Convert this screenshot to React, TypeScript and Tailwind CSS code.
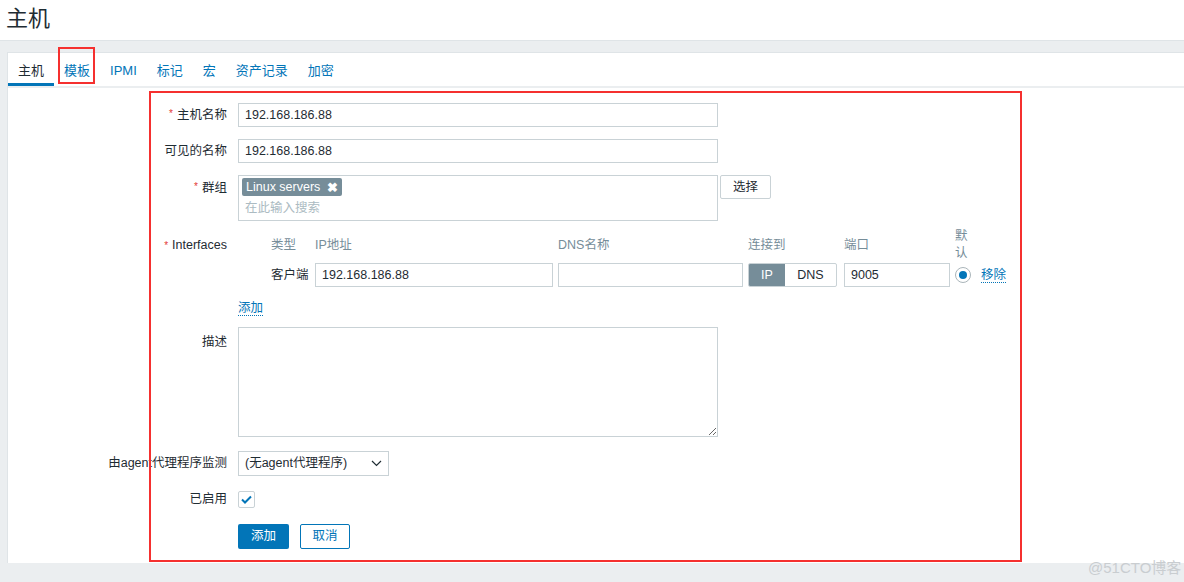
import React from 'react';

const FONT = "font-['Liberation_Sans','Noto_Sans_CJK_SC',sans-serif]";
const inp = 'h-[24px] border border-[#c9d2d6] bg-white px-[6px] flex items-center text-[12.5px] text-[#1f2c33]';

const tabs = ['主机', '模板', 'IPMI', '标记', '宏', '资产记录', '加密'];

function Label({ text, req, className = '' }: { text: string; req?: boolean; className?: string }) {
  return (
    <div className={`w-[220px] shrink-0 pr-[1px] text-right text-[12.5px] text-[#1f2c33] whitespace-nowrap ${className}`}>
      {req && <span className="text-[#e33734] text-[10px] mr-[4px] align-top">*</span>}
      {text}
    </div>
  );
}

export default function App() {
  return (
    <div className={`relative h-[582px] w-[1184px] overflow-hidden bg-[#ebeef0] ${FONT}`}>
      {/* Header */}
      <div className="h-[41px] bg-white border-b border-[#dfe4e7] pl-[6px] flex items-center">
        <h1 className="text-[22px] text-[#1f2c33] leading-none -mt-[2px]">主机</h1>
      </div>

      {/* Panel */}
      <div className="mt-[11px] ml-[7px] h-[511px] bg-white border-l border-t border-[#dfe4e7]">
        {/* Tabs */}
        <div className="h-[35px] border-b-2 border-[#ebeef0] flex items-end">
          {tabs.map((t, i) => (
            <div
              key={t}
              className={`h-[32px] px-[10px] flex items-center text-[13px] ${i === 0 ? 'text-[#1f2c33] border-b-[3px] border-[#0275b8] pt-[4px]' : 'text-[#0275b8] pt-[1px]'}`}
            >
              {t}
            </div>
          ))}
        </div>

        {/* Form */}
        <div className="pt-[15px] flex flex-col">
          <div className="flex items-center gap-[10px]">
            <Label text="主机名称" req />
            <div className={`${inp} w-[480px]`}>192.168.186.88</div>
          </div>

          <div className="mt-[12px] flex items-center gap-[10px]">
            <Label text="可见的名称" />
            <div className={`${inp} w-[480px]`}>192.168.186.88</div>
          </div>

          <div className="mt-[12px] flex items-start gap-[10px]">
            <Label text="群组" req className="pt-[4px]" />
            <div className="w-[480px] h-[46px] border border-[#c9d2d6] px-[3px] pt-[2px] flex flex-col items-start">
              <div className="flex items-center h-[18px] bg-[#768d99] text-white text-[12.5px] px-[4px] gap-[7px] rounded-[2px]">
                Linux servers
                <span className="text-[13px] font-bold leading-none">✖</span>
              </div>
              <div className="text-[12.5px] text-[#acbbc2] pl-[3px] mt-[4px] leading-[16px]">在此输入搜索</div>
            </div>
            <div className="-ml-[8px] h-[24px] w-[51px] border border-[#c9d2d6] rounded-[2px] flex items-center justify-center text-[12.5px] text-[#1f2c33]">
              选择
            </div>
          </div>

          {/* Interfaces */}
          <div className="mt-[7px] flex items-start gap-[10px]">
            <Label text="Interfaces" req className="h-[34px] flex items-center justify-end" />
            <div className="pl-[33px]">
              <div className="h-[34px] flex items-center text-[12.5px] text-[#768d99]">
                <div className="w-[44px]">类型</div>
                <div className="w-[243px]">IP地址</div>
                <div className="w-[190px]">DNS名称</div>
                <div className="w-[96px]">连接到</div>
                <div className="w-[111px]">端口</div>
                <div className="w-[14px] leading-[17px]">默认</div>
              </div>
              <div className="mt-[1px] flex items-center text-[12.5px]">
                <div className="w-[44px] text-[#1f2c33]">客户端</div>
                <div className={`${inp} w-[238px]`}>192.168.186.88</div>
                <div className={`${inp} w-[185px] ml-[5px]`}></div>
                <div className="ml-[5px] h-[24px] flex border border-[#c9d2d6] rounded-[2px] overflow-hidden">
                  <div className="w-[36px] bg-[#768d99] text-white flex items-center justify-center">IP</div>
                  <div className="w-[51px] text-[#1f2c33] flex items-center justify-center">DNS</div>
                </div>
                <div className={`${inp} w-[106px] ml-[7px]`}>9005</div>
                <div className="ml-[5px] w-[16px] h-[16px] rounded-full border border-[#aab5ba] flex items-center justify-center">
                  <div className="w-[8px] h-[8px] rounded-full bg-[#0275b8]" />
                </div>
                <span className="ml-[10px] text-[#0275b8] border-b border-dotted border-[#0275b8] leading-[14px]">移除</span>
              </div>
            </div>
          </div>

          <div className="mt-[13px] h-[16px] flex items-center gap-[10px]">
            <div className="w-[220px] shrink-0" />
            <span className="text-[12.5px] text-[#0275b8] border-b border-dotted border-[#0275b8] leading-[14px]">添加</span>
          </div>

          <div className="mt-[11px] flex items-start gap-[10px]">
            <Label text="描述" className="pt-[6px]" />
            <textarea className="w-[480px] h-[110px] border border-[#c9d2d6] outline-none" />
          </div>

          <div className="mt-[14px] flex items-center gap-[10px]">
            <Label text="由agent代理程序监测" />
            <div className={`${inp} w-[151px] h-[25px] justify-between`}>
              <span>(无agent代理程序)</span>
              <svg width="11" height="7" viewBox="0 0 11 7" fill="none" stroke="#1f2c33" strokeWidth="1.2">
                <path d="M1 1l4.5 4.5L10 1" />
              </svg>
            </div>
          </div>

          <div className="mt-[14px] flex items-center gap-[10px]">
            <Label text="已启用" />
            <div className="w-[17px] h-[17px] border border-[#c9d2d6] rounded-[2px] flex items-center justify-center">
              <svg width="11" height="9" viewBox="0 0 11 9" fill="none" stroke="#0275b8" strokeWidth="2">
                <path d="M1 4.5l3 3L10 1.5" />
              </svg>
            </div>
          </div>

          <div className="mt-[15px] flex items-center gap-[10px]">
            <div className="w-[220px] shrink-0" />
            <div className="flex gap-[11px]">
              <div className="w-[51px] h-[25px] bg-[#0275b8] rounded-[2px] text-white text-[12.5px] flex items-center justify-center">添加</div>
              <div className="w-[50px] h-[25px] border border-[#0275b8] rounded-[2px] text-[#0275b8] text-[12.5px] flex items-center justify-center">取消</div>
            </div>
          </div>
        </div>
      </div>

      {/* Annotations */}
      <div className="absolute left-[58px] top-[47px] w-[37px] h-[37px] border-2 border-[#f5302f]" />
      <div className="absolute left-[149px] top-[91px] w-[873px] h-[471px] border-2 border-[#f5302f]" />
      <div className="absolute left-[1088px] top-[557px] text-[15px] text-[#c9cdd0]">@51CTO博客</div>
    </div>
  );
}
